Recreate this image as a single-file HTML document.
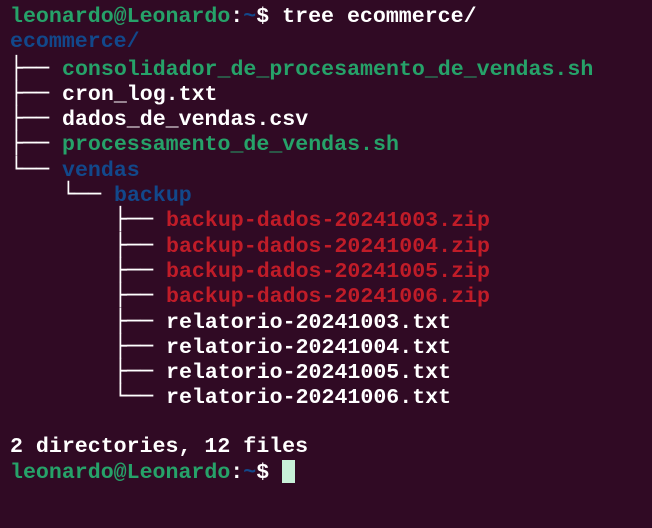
<!DOCTYPE html>
<html><head><meta charset="utf-8"><style>
html,body{margin:0;padding:0;background:#300a24;width:652px;height:528px;overflow:hidden}
#t{position:absolute;left:10px;top:5px;font-family:"Liberation Mono","DejaVu Sans Mono",monospace;font-size:21.6px;color:#fff;font-weight:bold}
#t div{height:25.3px;line-height:25px;white-space:pre}
.g{color:#26a269}.b{color:#12488b}.r{color:#c01c28}
.t{font-family:"DejaVu Sans Mono",monospace;font-weight:normal;line-height:25px}
.c{display:inline-block;width:13px;height:23px;background:#c8f0d8;vertical-align:-5px}
</style></head><body>
<div id="t">
<div><span class="g">leonardo@Leonardo</span>:<span class="b">~</span>$ tree ecommerce/</div>
<div><span class="b">ecommerce/</span></div>
<div><span class="t">├── </span><span class="g">consolidador_de_procesamento_de_vendas.sh</span></div>
<div><span class="t">├── </span>cron_log.txt</div>
<div><span class="t">├── </span>dados_de_vendas.csv</div>
<div><span class="t">├── </span><span class="g">processamento_de_vendas.sh</span></div>
<div><span class="t">└── </span><span class="b">vendas</span></div>
<div><span class="t">    └── </span><span class="b">backup</span></div>
<div><span class="t">        ├── </span><span class="r">backup-dados-20241003.zip</span></div>
<div><span class="t">        ├── </span><span class="r">backup-dados-20241004.zip</span></div>
<div><span class="t">        ├── </span><span class="r">backup-dados-20241005.zip</span></div>
<div><span class="t">        ├── </span><span class="r">backup-dados-20241006.zip</span></div>
<div><span class="t">        ├── </span>relatorio-20241003.txt</div>
<div><span class="t">        ├── </span>relatorio-20241004.txt</div>
<div><span class="t">        ├── </span>relatorio-20241005.txt</div>
<div><span class="t">        └── </span>relatorio-20241006.txt</div>
<div></div>
<div>2 directories, 12 files</div>
<div><span class="g">leonardo@Leonardo</span>:<span class="b">~</span>$ <span class="c"></span></div>
</div>
</body></html>
